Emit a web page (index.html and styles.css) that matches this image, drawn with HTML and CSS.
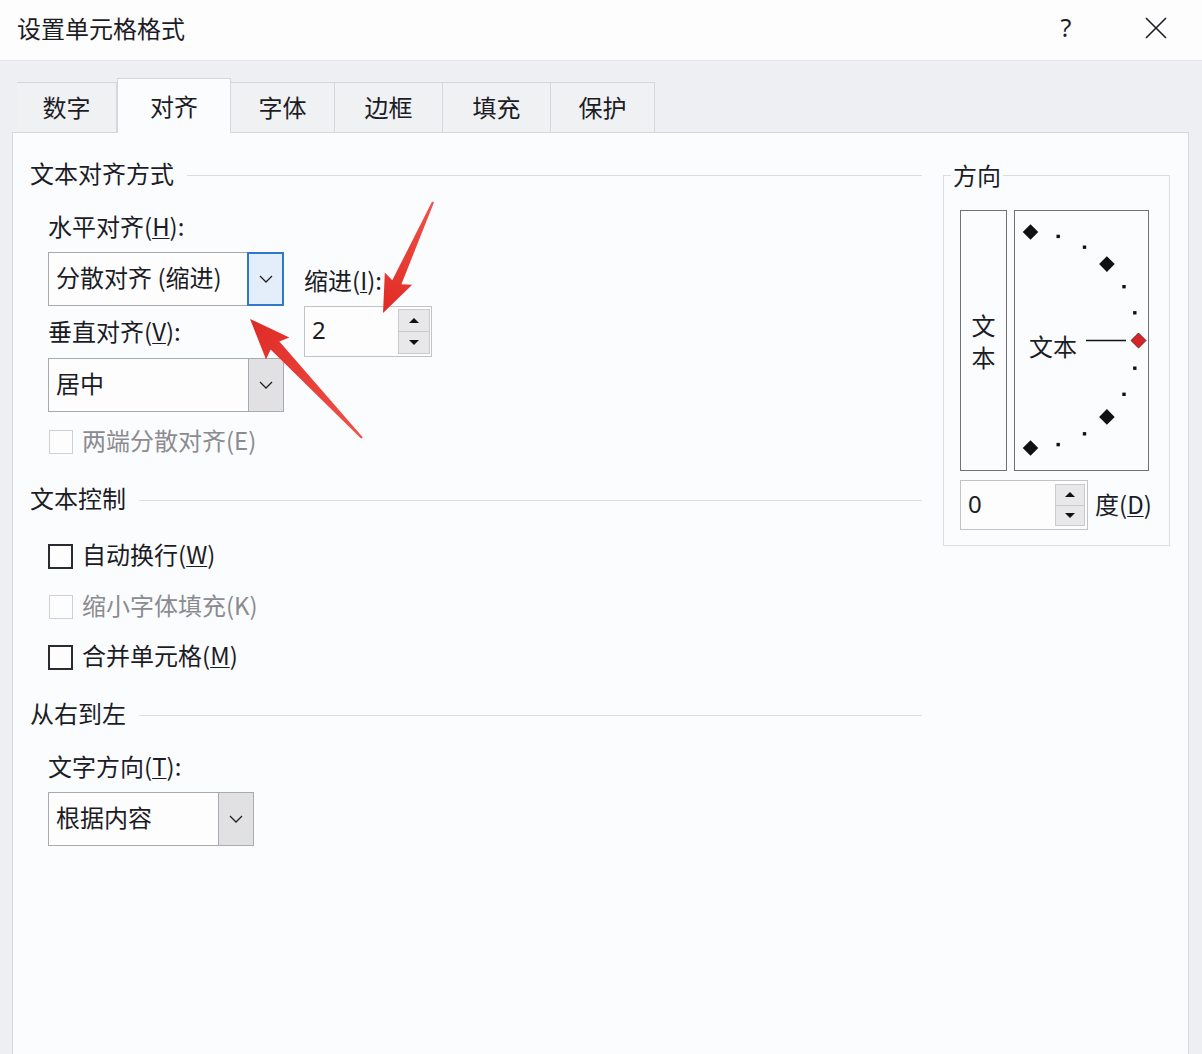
FILE: index.html
```html
<!DOCTYPE html>
<html lang="zh-CN">
<head>
<meta charset="utf-8">
<title>设置单元格格式</title>
<link rel="stylesheet" href="styles.css">
</head>
<body>
<div class="dialog">
  <div class="titlebar">
    <span class="title">设置单元格格式</span>
    <span class="tb-btn help">?</span>
    <span class="tb-btn close">
      <svg width="24" height="24" viewBox="0 0 24 24"><path d="M2 2 L22 22 M22 2 L2 22" stroke="#1c1c22" stroke-width="1.6" fill="none"/></svg>
    </span>
  </div>
  <div class="body">
    <div class="tabs">
      <div class="tab">数字</div>
      <div class="tab active">对齐</div>
      <div class="tab">字体</div>
      <div class="tab">边框</div>
      <div class="tab">填充</div>
      <div class="tab">保护</div>
    </div>
    <div class="panel">
      <div class="left">
        <div class="sec"><span class="st">文本对齐方式</span></div>
        <div class="group g1">
          <div class="row1">
            <div class="col-a">
              <div class="label">水平对齐(<u>H</u>):</div>
              <div class="combo combo-wide mt9">
                <span class="combo-text">分散对齐 (缩进)</span>
                <span class="combo-btn focus"><svg width="14" height="8" viewBox="0 0 14 8"><path d="M1 1 L7 7 L13 1" stroke="#222" stroke-width="1.3" fill="none"/></svg></span>
              </div>
              <div class="label mt12">垂直对齐(<u>V</u>):</div>
              <div class="combo combo-wide mt10">
                <span class="combo-text">居中</span>
                <span class="combo-btn"><svg width="14" height="8" viewBox="0 0 14 8"><path d="M1 1 L7 7 L13 1" stroke="#222" stroke-width="1.3" fill="none"/></svg></span>
              </div>
            </div>
            <div class="col-b">
              <div class="label">缩进(<u>I</u>):</div>
              <div class="spin mt9">
                <span class="spin-val">2</span>
                <span class="spin-btns">
                  <span class="sb"><span class="tri-up"></span></span>
                  <span class="sb"><span class="tri-down"></span></span>
                </span>
              </div>
            </div>
          </div>
          <div class="check disabled mt15"><span class="box"></span><span class="ct">两端分散对齐(E)</span></div>
        </div>
        <div class="sec mt28"><span class="st">文本控制</span></div>
        <div class="group">
          <div class="check mt26"><span class="box"></span><span class="ct">自动换行(<u>W</u>)</span></div>
          <div class="check disabled mt21"><span class="box"></span><span class="ct">缩小字体填充(K)</span></div>
          <div class="check mt20"><span class="box"></span><span class="ct">合并单元格(<u>M</u>)</span></div>
        </div>
        <div class="sec mt28"><span class="st">从右到左</span></div>
        <div class="group">
          <div class="label mt23">文字方向(<u>T</u>):</div>
          <div class="combo combo-narrow mt9">
            <span class="combo-text">根据内容</span>
            <span class="combo-btn"><svg width="14" height="8" viewBox="0 0 14 8"><path d="M1 1 L7 7 L13 1" stroke="#222" stroke-width="1.3" fill="none"/></svg></span>
          </div>
        </div>
      </div>
      <fieldset class="orient">
        <legend>方向</legend>
        <div class="orient-row">
          <div class="vtext"><span>文</span><span>本</span></div>
          <div class="dial">
            <svg width="133" height="259" viewBox="0 0 133 259">
              <g fill="#111">
                <rect x="10" y="15.5" width="11" height="11" transform="rotate(45 15.5 21)"/>
                <rect x="86.4" y="47.6" width="11" height="11" transform="rotate(45 91.9 53.1)"/>
                <rect x="86.4" y="200.4" width="11" height="11" transform="rotate(45 91.9 205.9)"/>
                <rect x="10" y="231.5" width="11" height="11" transform="rotate(45 15.5 237)"/>
                <rect x="41.5" y="23.7" width="3.4" height="3.4"/>
                <rect x="67.8" y="34.5" width="3.4" height="3.4"/>
                <rect x="107.3" y="74" width="3.4" height="3.4"/>
                <rect x="118.1" y="100.1" width="3.4" height="3.4"/>
                <rect x="118.1" y="155.5" width="3.4" height="3.4"/>
                <rect x="107.3" y="181.6" width="3.4" height="3.4"/>
                <rect x="67.8" y="221.1" width="3.4" height="3.4"/>
                <rect x="41.5" y="231.9" width="3.4" height="3.4"/>
              </g>
              <line x1="71" y1="129.5" x2="111" y2="129.5" stroke="#111" stroke-width="1.6"/>
              <rect x="118.2" y="124.2" width="10.6" height="10.6" transform="rotate(45 123.5 129.5)" fill="#d2262a" stroke="#5a1414" stroke-width="0.8"/>
              <text x="38" y="134" text-anchor="middle" dominant-baseline="central" class="dial-text">文本</text>
            </svg>
          </div>
        </div>
        <div class="deg-row">
          <div class="spin spin-deg">
            <span class="spin-val">0</span>
            <span class="spin-btns">
              <span class="sb"><span class="tri-up"></span></span>
              <span class="sb"><span class="tri-down"></span></span>
            </span>
          </div>
          <span class="deg-label">度(<u>D</u>)</span>
        </div>
      </fieldset>
    </div>
  </div>
  <svg class="arrows" width="1202" height="1054" viewBox="0 0 1202 1054">
    <defs>
      <linearGradient id="ag" x1="0" y1="0" x2="1" y2="0">
        <stop offset="0" stop-color="#f0524a"/>
        <stop offset="1" stop-color="#e02a24"/>
      </linearGradient>
    </defs>
    <g transform="translate(433 202) rotate(114.25)">
      <polygon points="0,-1 88,-5 84,-15 121.7,0 84,15 88,5 0,1" fill="url(#ag)"/>
    </g>
    <g transform="translate(362 438) rotate(-133.26)">
      <polygon points="0,-1 127,-6 123,-16 163.4,0 123,16 127,6 0,1" fill="url(#ag)"/>
    </g>
  </svg>
</div>
</body>
</html>
```

FILE: styles.css
```css
* { box-sizing: border-box; }
html, body { margin: 0; padding: 0; }
body {
  width: 1202px;
  height: 1054px;
  overflow: hidden;
  background: #eeeff2;
  font-family: "Noto Sans CJK SC", "Noto Sans", sans-serif;
  font-size: 24px;
  color: #1c1c26;
}
u { text-decoration-thickness: 1px; text-underline-offset: 2px; }
.dialog { position: relative; width: 1202px; height: 1054px; }

.titlebar {
  height: 61px;
  background: #fdfdfe;
  border-bottom: 1px solid #e3e4e8;
  display: flex;
  align-items: center;
  padding-left: 17px;
  padding-right: 23px;
}
.title { flex: 1; line-height: 30px; margin-top: -5px; }
.tb-btn { width: 46px; height: 40px; display: flex; align-items: center; justify-content: center; }
.help { font-family: "Noto Sans", sans-serif; font-size: 25px; margin-right: 44px; margin-top: -6px; }
.close { margin-top: -4px; }

.body { padding: 0 13px 0 12px; }
.tabs { display: flex; align-items: flex-end; height: 71px; margin-left: 5px; }
.tab {
  height: 50px;
  background: #f0f1f3;
  border-top: 1px solid #d6d7da;
  border-right: 1px solid #d6d7da;
  display: flex;
  align-items: center;
  justify-content: center;
  padding-bottom: 2px;
}
.tab:nth-child(1) { width: 100px; }
.tab:nth-child(2) { width: 114px; }
.tab:nth-child(3) { width: 104px; }
.tab:nth-child(4) { width: 108px; }
.tab:nth-child(5) { width: 108px; }
.tab:nth-child(6) { width: 104px; }
.tab.active {
  height: 55px;
  background: #fbfcfe;
  border: 1px solid #d6d7da;
  border-bottom: none;
  margin-bottom: -1px;
  position: relative;
  z-index: 2;
  padding-bottom: 2px;
}

.panel {
  height: 930px;
  background: #fbfcfe;
  border: 1px solid #d6d7da;
  border-bottom: none;
  padding: 27px 0 0 17px;
  display: grid;
  grid-template-columns: 892px 227px;
  column-gap: 21px;
  align-items: start;
}
.left { display: flex; flex-direction: column; }
.sec { display: flex; align-items: flex-start; height: 30px; }
.st { line-height: 26px; }
.sec::after { content: ""; flex: 1; height: 1px; background: #dcdde1; margin-left: 13px; align-self: center; }
.group { padding-left: 18px; display: flex; flex-direction: column; }
.g1 { margin-top: 23px; }
.label { height: 30px; line-height: 26px; }
.mt9 { margin-top: 9px; }
.mt10 { margin-top: 10px; }
.mt12 { margin-top: 12px; }
.mt15 { margin-top: 15px; }
.mt20 { margin-top: 20px; }
.mt21 { margin-top: 21px; }
.mt23 { margin-top: 23px; }
.mt26 { margin-top: 26px; }
.mt28 { margin-top: 28px; }

.row1 { display: flex; }
.col-a { width: 236px; display: flex; flex-direction: column; }
.col-b { margin-left: 20px; padding-top: 54px; display: flex; flex-direction: column; }

.combo {
  height: 54px;
  border: 1px solid #a9aaad;
  background: #fdfdfe;
  display: flex;
}
.combo-wide { width: 236px; }
.combo-narrow { width: 206px; }
.combo-text { flex: 1; padding-left: 7px; line-height: 48px; white-space: nowrap; }
.combo-btn {
  width: 35px;
  background: #e1e1e3;
  border-left: 1px solid #a9aaad;
  display: flex;
  align-items: center;
  justify-content: center;
}
.combo-btn.focus {
  width: 37px;
  margin: -1px -1px -1px 0;
  background: #e4eefa;
  border: 2px solid #2f78cc;
}

.spin {
  width: 128px;
  height: 51px;
  border: 1px solid #c2c3c6;
  background: #fdfdfe;
  display: flex;
  padding: 2px 1px 2px 0;
  flex: none;
}
.spin-val { flex: 1; padding-left: 7px; line-height: 42px; font-family: "Noto Sans", sans-serif; }
.spin-btns { width: 32px; display: flex; flex-direction: column; }
.sb {
  flex: 1;
  background: #e8e8ea;
  border: 1px solid #c9cacd;
  display: flex;
  align-items: center;
  justify-content: center;
}
.sb + .sb { border-top: none; }
.tri-up { width: 0; height: 0; border-left: 5px solid transparent; border-right: 5px solid transparent; border-bottom: 5px solid #111; }
.tri-down { width: 0; height: 0; border-left: 5px solid transparent; border-right: 5px solid transparent; border-top: 5px solid #111; }

.check { display: flex; align-items: center; height: 30px; }
.ct { line-height: 26px; margin-bottom: 4px; }
.box {
  width: 25px;
  height: 25px;
  border: 2px solid #2a2a30;
  background: #fdfdfe;
  margin-right: 9px;
  flex: none;
}
.check.disabled { color: #8b8b90; }
.check.disabled .box { border: 1.5px solid #cfd0d3; width: 24px; height: 24px; margin-left: 1px; margin-right: 9px; }

.orient {
  margin: 0;
  padding: 20px 19px 15px 16px;
  border: 1px solid #dcdde1;
  min-width: 0;
}
.orient legend { padding: 0 2px; margin-left: -9px; line-height: 30px; }
.orient-row { display: flex; gap: 7px; height: 261px; }
.vtext {
  width: 47px;
  border: 1px solid #727275;
  display: flex;
  flex-direction: column;
  align-items: center;
  justify-content: center;
  line-height: 32px;
}
.dial { width: 135px; border: 1px solid #727275; }
.dial svg { display: block; }
.dial-text { font-family: "Noto Sans CJK SC", sans-serif; font-size: 24px; fill: #1c1c26; }
.deg-row { display: flex; align-items: center; margin-top: 9px; white-space: nowrap; }
.spin-deg { height: 50px; padding: 3px 2px 3px 0; }
.spin-deg .spin-btns { width: 30px; }
.spin-deg .spin-val { line-height: 40px; }
.deg-label { margin-left: 7px; margin-top: -4px; flex: none; white-space: nowrap; }

.arrows { position: absolute; left: 0; top: 0; pointer-events: none; }
```
